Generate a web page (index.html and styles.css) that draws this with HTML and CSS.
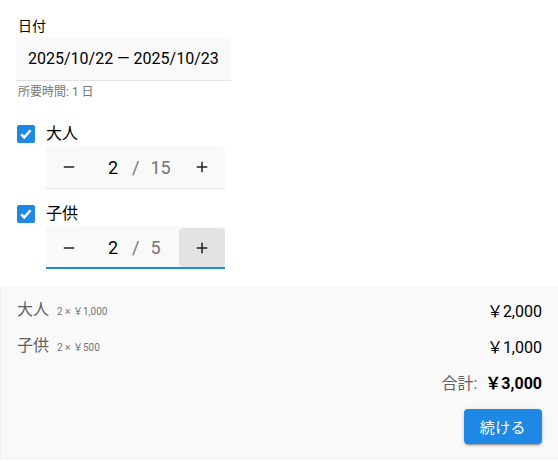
FILE: index.html
```html
<!DOCTYPE html>
<html lang="ja">
<head>
<meta charset="utf-8">
<link rel="stylesheet" href="styles.css">
</head>
<body>
<div class="form">
  <div class="field-label">日付</div>
  <div class="date-field">2025/10/22 — 2025/10/23</div>
  <div class="helper">所要時間: 1 日</div>

  <div class="check-row">
    <svg class="cb" width="18" height="18" viewBox="0 0 18 18"><rect width="18" height="18" rx="2" fill="#1e88e5"/><polyline points="4.2,9.2 7.2,12.4 13.6,5.2" fill="none" stroke="#fff" stroke-width="2.4"/></svg>
    <span class="check-label">大人</span>
  </div>
  <div class="stepper">
    <button class="step-btn"><svg width="18" height="18" viewBox="0 0 24 24"><path d="M19 13H5v-2h14v2z" fill="#212121"/></svg></button>
    <div class="step-value"><span class="cur">2</span><span class="sep">/</span><span class="max">15</span></div>
    <button class="step-btn"><svg width="18" height="18" viewBox="0 0 24 24"><path d="M19 13h-6v6h-2v-6H5v-2h6V5h2v6h6v2z" fill="#212121"/></svg></button>
  </div>

  <div class="check-row second">
    <svg class="cb" width="18" height="18" viewBox="0 0 18 18"><rect width="18" height="18" rx="2" fill="#1e88e5"/><polyline points="4.2,9.2 7.2,12.4 13.6,5.2" fill="none" stroke="#fff" stroke-width="2.4"/></svg>
    <span class="check-label">子供</span>
  </div>
  <div class="stepper focused">
    <button class="step-btn"><svg width="18" height="18" viewBox="0 0 24 24"><path d="M19 13H5v-2h14v2z" fill="#212121"/></svg></button>
    <div class="step-value"><span class="cur">2</span><span class="sep">/</span><span class="max">5</span></div>
    <button class="step-btn hover"><svg width="18" height="18" viewBox="0 0 24 24"><path d="M19 13h-6v6h-2v-6H5v-2h6V5h2v6h6v2z" fill="#212121"/></svg></button>
  </div>
</div>

<div class="summary">
  <div class="line">
    <div class="line-left"><span class="line-name">大人</span><span class="line-detail">2 × ￥1,000</span></div>
    <span class="line-amount">￥2,000</span>
  </div>
  <div class="line">
    <div class="line-left"><span class="line-name">子供</span><span class="line-detail">2 × ￥500</span></div>
    <span class="line-amount">￥1,000</span>
  </div>
  <div class="total">
    <span class="total-label">合計:</span>
    <span class="total-amount">￥3,000</span>
  </div>
  <div class="actions">
    <button class="btn-primary">続ける</button>
  </div>
</div>
</body>
</html>
```

FILE: styles.css
```css
* { box-sizing: border-box; }

body {
  margin: 0;
  font-family: Roboto, "Noto Sans CJK JP", sans-serif;
  color: rgba(0, 0, 0, 0.87);
  background: #fff;
}

.form {
  padding: 16px 16px 0 16px;
}

.field-label {
  font-size: 14px;
  line-height: 20px;
  color: #000;
  margin-bottom: 1px;
  padding-left: 2px;
}

.date-field {
  display: inline-flex;
  align-items: center;
  height: 44px;
  padding: 0 12px;
  font-size: 16px;
  color: #000;
  background: #f9f9f9;
  border-bottom: 1px solid #e2e2e2;
  border-radius: 4px 4px 0 0;
}

.helper {
  font-size: 12px;
  line-height: 16px;
  margin-top: 3px;
  padding-left: 2px;
  color: #757575;
}

.check-row {
  display: flex;
  align-items: center;
  height: 24px;
  margin-top: 22px;
}

.check-row.second {
  margin-top: 13px;
}

.cb {
  margin-left: 1px;
  flex: none;
}

.check-label {
  margin-left: 11px;
  font-size: 16px;
  line-height: 24px;
  color: #000;
}

.stepper {
  display: flex;
  align-items: center;
  width: 179px;
  height: 43px;
  margin-left: 30px;
  background: #f9f9f9;
  border-bottom: 1px solid #e2e2e2;
  border-radius: 4px 4px 0 0;
}

.stepper.focused {
  border-bottom: 2px solid #1e88e5;
  align-items: flex-end;
}

.step-btn {
  display: flex;
  align-items: center;
  justify-content: center;
  width: 46px;
  height: 39px;
  padding: 0;
  border: 0;
  border-radius: 4px;
  background: transparent;
  flex: none;
}

.stepper:not(.focused) .step-btn {
  height: 42px;
}

.step-btn.hover {
  background: #e3e3e3;
}

.step-value {
  flex: 1;
  display: flex;
  align-items: center;
  height: 39px;
  font-size: 18px;
}

.cur {
  width: 26px;
  text-align: right;
  color: #000;
}

.sep {
  margin-left: 14px;
  color: #757575;
}

.max {
  margin-left: 11px;
  color: #757575;
}

.summary {
  margin-top: 17px;
  padding: 12px 16px 16px 16px;
  background: #f9f9f9;
  border-left: 1px solid #f1f1f1;
}

.line {
  display: flex;
  align-items: center;
  justify-content: space-between;
  height: 24px;
  margin-bottom: 12px;
}

.line-left {
  display: flex;
  align-items: center;
}

.line-name {
  font-size: 16px;
  line-height: 24px;
  color: #616161;
}

.line-detail {
  margin-left: 8px;
  font-size: 10px;
  color: #757575;
}

.line-amount {
  font-size: 16px;
  color: #000;
}

.total {
  display: flex;
  justify-content: flex-end;
  align-items: center;
  height: 24px;
  margin-top: 2px;
  font-size: 16px;
}

.total-label {
  color: #616161;
  margin-right: 8px;
}

.total-amount {
  font-weight: 700;
  color: #000;
}

.actions {
  display: flex;
  justify-content: flex-end;
  margin-top: 15px;
}

.btn-primary {
  height: 35px;
  padding: 0 16px;
  font-family: Roboto, "Noto Sans CJK JP", sans-serif;
  font-size: 15px;
  letter-spacing: 0.4px;
  color: #fff;
  background: #1e88e5;
  border: 0;
  border-radius: 4px;
  box-shadow: 0 3px 1px -2px rgba(0,0,0,0.2), 0 2px 2px 0 rgba(0,0,0,0.14), 0 1px 5px 0 rgba(0,0,0,0.12);
}
```
